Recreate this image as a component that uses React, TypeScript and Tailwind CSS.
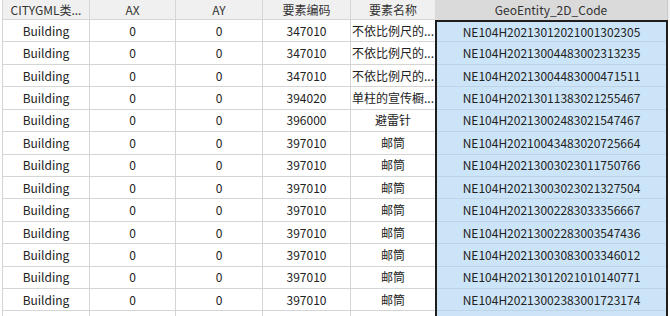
const rows = [
  { code: "347010", name: "不依比例尺的...", geo: "NE104H20213012021001302305" },
  { code: "347010", name: "不依比例尺的...", geo: "NE104H20213004483002313235" },
  { code: "347010", name: "不依比例尺的...", geo: "NE104H20213004483000471511" },
  { code: "394020", name: "单柱的宣传橱...", geo: "NE104H20213011383021255467" },
  { code: "396000", name: "避雷针", geo: "NE104H20213002483021547467" },
  { code: "397010", name: "邮筒", geo: "NE104H20210043483020725664" },
  { code: "397010", name: "邮筒", geo: "NE104H20213003023011750766" },
  { code: "397010", name: "邮筒", geo: "NE104H20213003023021327504" },
  { code: "397010", name: "邮筒", geo: "NE104H20213002283033356667" },
  { code: "397010", name: "邮筒", geo: "NE104H20213002283003547436" },
  { code: "397010", name: "邮筒", geo: "NE104H20213003083003346012" },
  { code: "397010", name: "邮筒", geo: "NE104H20213012021010140771" },
  { code: "397010", name: "邮筒", geo: "NE104H20213002383001723174" },
  { code: "", name: "", geo: "" },
];

const cell = "flex items-center justify-center shrink-0 border-r border-[#d5d5d5] whitespace-nowrap overflow-hidden";

export default function App() {
  return (
    <div
      className="w-[670px] h-[316px] overflow-hidden bg-white text-[12px] text-[#222]"
      style={{ fontFamily: '"Noto Sans CJK SC", "Noto Sans", sans-serif' }}
    >
      <div className="pl-[2px]">
        <div className="border-l border-[#d5d5d5]">
          {/* Header */}
          <div className="flex h-[20px] bg-[#f0f0f0] text-[#333]">
            <div className={`${cell} w-[87px] border-b`}>CITYGML类...</div>
            <div className={`${cell} w-[86px] border-b`}>AX</div>
            <div className={`${cell} w-[87px] border-b`}>AY</div>
            <div className={`${cell} w-[88px] border-b`}>要素编码</div>
            <div className={`${cell} w-[84px] border-b border-r-0`}>要素名称</div>
            <div className={`${cell} w-[233px] bg-[#dadada] border-r-[#c8c8c8]`}>GeoEntity_2D_Code</div>
          </div>

          {/* Body */}
          {rows.map((r, i) => (
            <div key={i} className="flex h-[22.43px]">
              <div className={`${cell} w-[87px] border-b`}>{r.code && "Building"}</div>
              <div className={`${cell} w-[86px] border-b`}>{r.code && "0"}</div>
              <div className={`${cell} w-[87px] border-b`}>{r.code && "0"}</div>
              <div className={`${cell} w-[88px] border-b`}>{r.code}</div>
              <div className={`${cell} w-[84px] border-b border-r-0`}>{r.name}</div>
              <div
                className={`flex items-center justify-center shrink-0 w-[233px] bg-[#cce4f7] border-x-2 border-[#1e1e1e] ${
                  i === 0 ? "border-t-2" : ""
                }`}
              >
                <div className="flex items-center justify-center w-full h-full border-b border-[#bfd3e6]">
                  {r.geo}
                </div>
              </div>
            </div>
          ))}
        </div>
      </div>
    </div>
  );
}
